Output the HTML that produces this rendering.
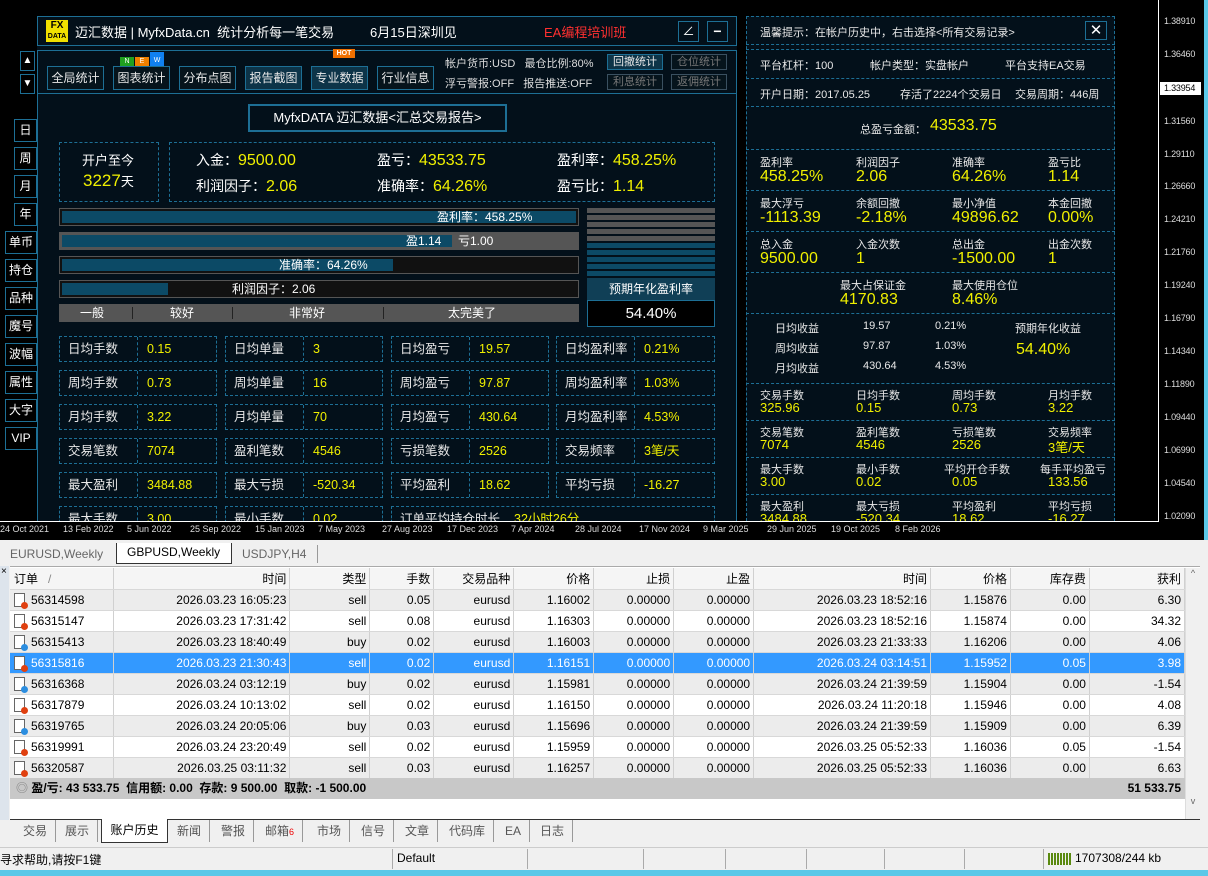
<!DOCTYPE html>
<html><head><meta charset="utf-8"><style>
*{margin:0;padding:0;box-sizing:border-box}
body{width:1208px;height:876px;overflow:hidden;background:#000;font-family:"Liberation Sans","Noto Sans CJK SC",sans-serif;position:relative;color:#e8e8e8}
.a{position:absolute;white-space:nowrap}
.y{color:#f0f000}
.bx{position:absolute;border:1px solid #1d6f95}
.ds{position:absolute;border:1px dashed #1d6f95}
.btn{position:absolute;border:1px solid #1d6f95;background:#06141c;color:#e8e8e8;font-size:12px;text-align:center;line-height:22px}
.sb{position:absolute;border:1px solid #1d6f95;background:#000;color:#fff;font-size:12px;text-align:center}
.pr{position:absolute;left:1164px;font-size:9px;color:#ddd;font-family:"Liberation Sans",sans-serif;letter-spacing:-0.2px}
.dt{position:absolute;top:524px;font-size:9px;color:#ddd;font-family:"Liberation Sans",sans-serif}
.bar{position:absolute;left:59px;width:520px;height:18px;border:1px solid #555;background:#111}
.bar i{position:absolute;left:2px;top:2px;bottom:2px;background:#0c4a66}
.bar span{position:absolute;top:0;font-size:12px;line-height:16px;color:#fff}
.cell{position:absolute;height:26px;border:1px dashed #1d6f95;font-size:12.5px;line-height:24px}
.cell b{font-weight:normal;position:absolute;left:8px}
.cell u{text-decoration:none;position:absolute;left:87px;color:#f0f000}
.cell s{position:absolute;left:77px;top:0;bottom:0;border-left:1px dashed #1d6f95}
.rs{position:absolute;left:746px;width:369px;border-top:1px dashed #1d6f95;font-size:11px}
.rl{position:absolute;font-size:11px;color:#e8e8e8}
.rv{position:absolute;font-size:16px;color:#f0f000}
table{border-collapse:collapse;position:absolute;left:10px;top:568px;width:1175px;font-size:12px;color:#000;font-family:"Liberation Sans","Noto Sans CJK SC",sans-serif}
td{height:21px;border-right:1px solid #d0d0d0;border-bottom:1px solid #d8d8d8;text-align:right;padding:0 3px;white-space:nowrap}
tr:nth-child(even) td{background:#ececec}
tr:nth-child(odd) td{background:#fff}
tr.h td{background:#f5f5f5;height:21px}
tr.sel td{background:#3399ff;color:#fff}
td.o{text-align:left;padding-left:4px}
.ic{display:inline-block;width:11px;height:14px;border:1px solid #666;background:#fff;vertical-align:-3px;margin-right:6px;position:relative}
.ic:after{content:"";position:absolute;right:-4px;bottom:-3px;width:7px;height:7px;border-radius:50%;background:#e04010}
.ic.bu:after{background:#2c8ee0}
.tb{position:absolute;top:820px;height:22px;font-size:12px;color:#555;line-height:22px;padding:0 8px;border-right:1px solid #999}
</style></head><body>

<div class="a" style="left:1158px;top:0;width:1px;height:522px;background:#fff"></div>
<div class="a" style="left:0;top:521px;width:1159px;height:1px;background:#fff"></div>
<div class="a" style="left:1204px;top:0;width:4px;height:540px;background:#5ac8e8"></div>
<div class="pr" style="top:16px">1.38910</div><div class="pr" style="top:49px">1.36460</div>
<div class="a" style="left:1160px;top:82px;width:41px;height:13px;background:#fff"></div>
<div class="pr" style="top:83px;color:#000">1.33954</div>
<div class="pr" style="top:116px">1.31560</div><div class="pr" style="top:149px">1.29110</div><div class="pr" style="top:181px">1.26660</div><div class="pr" style="top:214px">1.24210</div><div class="pr" style="top:247px">1.21760</div><div class="pr" style="top:280px">1.19240</div><div class="pr" style="top:313px">1.16790</div><div class="pr" style="top:346px">1.14340</div><div class="pr" style="top:379px">1.11890</div><div class="pr" style="top:412px">1.09440</div><div class="pr" style="top:445px">1.06990</div><div class="pr" style="top:478px">1.04540</div><div class="pr" style="top:511px">1.02090</div>
<div class="dt" style="left:0">24 Oct 2021</div><div class="dt" style="left:63px">13 Feb 2022</div><div class="dt" style="left:127px">5 Jun 2022</div><div class="dt" style="left:190px">25 Sep 2022</div><div class="dt" style="left:255px">15 Jan 2023</div><div class="dt" style="left:318px">7 May 2023</div><div class="dt" style="left:382px">27 Aug 2023</div><div class="dt" style="left:447px">17 Dec 2023</div><div class="dt" style="left:511px">7 Apr 2024</div><div class="dt" style="left:575px">28 Jul 2024</div><div class="dt" style="left:639px">17 Nov 2024</div><div class="dt" style="left:703px">9 Mar 2025</div><div class="dt" style="left:767px">29 Jun 2025</div><div class="dt" style="left:831px">19 Oct 2025</div><div class="dt" style="left:895px">8 Feb 2026</div>

<div class="sb" style="left:20px;top:51px;width:15px;height:20px;line-height:18px;font-size:10px">▲</div>
<div class="sb" style="left:20px;top:74px;width:15px;height:20px;line-height:18px;font-size:10px">▼</div>
<div class="sb" style="left:14px;top:119px;width:23px;height:23px;line-height:21px">日</div>
<div class="sb" style="left:14px;top:147px;width:23px;height:23px;line-height:21px">周</div>
<div class="sb" style="left:14px;top:175px;width:23px;height:23px;line-height:21px">月</div>
<div class="sb" style="left:14px;top:203px;width:23px;height:23px;line-height:21px">年</div>
<div class="sb" style="left:5px;top:231px;width:32px;height:23px;line-height:21px">单币</div>
<div class="sb" style="left:5px;top:259px;width:32px;height:23px;line-height:21px">持仓</div>
<div class="sb" style="left:5px;top:287px;width:32px;height:23px;line-height:21px">品种</div>
<div class="sb" style="left:5px;top:315px;width:32px;height:23px;line-height:21px">魔号</div>
<div class="sb" style="left:5px;top:343px;width:32px;height:23px;line-height:21px">波幅</div>
<div class="sb" style="left:5px;top:371px;width:32px;height:23px;line-height:21px">属性</div>
<div class="sb" style="left:5px;top:399px;width:32px;height:23px;line-height:21px">大字</div>
<div class="sb" style="left:5px;top:427px;width:32px;height:23px;line-height:21px">VIP</div>

<div class="a" style="left:37px;top:16px;width:700px;height:505px;background:#03101a"></div>
<div class="bx" style="left:37px;top:16px;width:700px;height:30px"></div>
<div class="a" style="left:46px;top:20px;width:22px;height:22px;background:#f0e000;color:#000;font-size:10px;font-weight:bold;text-align:center;line-height:10px;padding-top:1px">FX<br><span style="font-size:7px">DATA</span></div>
<div class="a" style="left:75px;top:22px;font-size:13px;color:#fff">迈汇数据 | MyfxData.cn&nbsp; 统计分析每一笔交易</div>
<div class="a" style="left:370px;top:22px;font-size:13px;color:#fff">6月15日深圳见</div>
<div class="a" style="left:544px;top:22px;font-size:13px;color:#ff3030">EA编程培训班</div>
<div class="sb" style="left:678px;top:21px;width:21px;height:21px;line-height:19px;font-size:12px;background:#03101a">∠</div>
<div class="sb" style="left:707px;top:21px;width:21px;height:21px;line-height:18px;font-size:14px;background:#03101a;font-weight:bold">−</div>

<div class="bx" style="left:37px;top:50px;width:700px;height:44px"></div>
<div class="btn" style="left:47px;top:66px;width:57px;height:24px">全局统计</div>
<div class="btn" style="left:113px;top:66px;width:57px;height:24px">图表统计</div>
<div class="btn" style="left:179px;top:66px;width:57px;height:24px">分布点图</div>
<div class="btn" style="left:245px;top:66px;width:57px;height:24px;background:#0d3448">报告截图</div>
<div class="btn" style="left:311px;top:66px;width:57px;height:24px;background:#0d3448">专业数据</div>
<div class="btn" style="left:377px;top:66px;width:57px;height:24px">行业信息</div>
<div class="a" style="left:120px;top:57px;width:14px;height:9px;background:#20a020;color:#fff;font-size:7px;text-align:center;line-height:9px">N</div>
<div class="a" style="left:135px;top:57px;width:14px;height:9px;background:#f08000;color:#fff;font-size:7px;text-align:center;line-height:9px">E</div>
<div class="a" style="left:150px;top:52px;width:14px;height:14px;background:#1080f0;color:#fff;font-size:7px;text-align:center;line-height:18px">W</div>
<div class="a" style="left:333px;top:49px;width:22px;height:9px;background:#f07000;color:#fff;font-size:7px;text-align:center;line-height:9px;font-weight:bold">HOT</div>
<div class="a" style="left:445px;top:55px;font-size:11px;color:#ddd">帐户货币:USD&nbsp;&nbsp; 最仓比例:80%</div>
<div class="a" style="left:445px;top:75px;font-size:11px;color:#ddd">浮亏警报:OFF&nbsp;&nbsp; 报告推送:OFF</div>
<div class="btn" style="left:607px;top:54px;width:56px;height:16px;line-height:14px;font-size:11px;background:#0d3448">回撤统计</div>
<div class="btn" style="left:671px;top:54px;width:56px;height:16px;line-height:14px;font-size:11px;color:#777;border-color:#3a5060">仓位统计</div>
<div class="btn" style="left:607px;top:74px;width:56px;height:16px;line-height:14px;font-size:11px;color:#777;border-color:#3a5060">利息统计</div>
<div class="btn" style="left:671px;top:74px;width:56px;height:16px;line-height:14px;font-size:11px;color:#777;border-color:#3a5060">返佣统计</div>

<div class="a" style="left:37px;top:94px;width:1px;height:427px;background:#1d6f95"></div>
<div class="a" style="left:736px;top:94px;width:1px;height:427px;background:#1d6f95"></div>
<div class="a" style="left:248px;top:104px;width:259px;height:28px;border:2px solid #1d6f95;font-size:13px;color:#fff;text-align:center;line-height:24px">MyfxDATA 迈汇数据&lt;汇总交易报告&gt;</div>

<div class="ds" style="left:59px;top:142px;width:100px;height:60px"></div>
<div class="a" style="left:82px;top:150px;font-size:13px;color:#fff">开户至今</div>
<div class="a" style="left:83px;top:171px;font-size:17px" ><span class="y">3227</span><span style="font-size:13px;color:#fff">天</span></div>
<div class="ds" style="left:169px;top:142px;width:546px;height:60px"></div>
<div class="a" style="left:196px;top:150px;font-size:14px;color:#fff">入金：<span class="y" style="font-size:16px">9500.00</span></div>
<div class="a" style="left:377px;top:150px;font-size:14px;color:#fff">盈亏：<span class="y" style="font-size:16px">43533.75</span></div>
<div class="a" style="left:557px;top:150px;font-size:14px;color:#fff">盈利率：<span class="y" style="font-size:16px">458.25%</span></div>
<div class="a" style="left:196px;top:176px;font-size:14px;color:#fff">利润因子：<span class="y" style="font-size:16px">2.06</span></div>
<div class="a" style="left:377px;top:176px;font-size:14px;color:#fff">准确率：<span class="y" style="font-size:16px">64.26%</span></div>
<div class="a" style="left:557px;top:176px;font-size:14px;color:#fff">盈亏比：<span class="y" style="font-size:16px">1.14</span></div>

<div class="bar" style="top:208px"><i style="width:514px"></i><span style="left:377px">盈利率：458.25%</span></div>
<div class="bar" style="top:232px;background:#555"><i style="width:390px"></i><span style="left:346px">盈1.14</span><span style="left:398px">亏1.00</span></div>
<div class="bar" style="top:256px"><i style="width:331px"></i><span style="left:219px">准确率：64.26%</span></div>
<div class="bar" style="top:280px"><i style="width:106px"></i><span style="left:172px">利润因子：2.06</span></div>
<div class="bar" style="top:304px;background:#555;font-size:12px;color:#fff;line-height:16px">
<span style="left:20px">一般</span><span style="left:110px">较好</span><span style="left:229px">非常好</span><span style="left:388px">太完美了</span>
<i style="left:72px;width:1px;background:#222"></i><i style="left:172px;width:1px;background:#222"></i><i style="left:323px;width:1px;background:#222"></i></div>
<div class="a" style="left:587px;top:208px;width:128px;height:68px;background:repeating-linear-gradient(#555 0 5px,transparent 5px 7px)"></div>
<div class="a" style="left:587px;top:243px;width:128px;height:33px;background:repeating-linear-gradient(#0c4a66 0 5px,transparent 5px 7px)"></div>
<div class="a" style="left:587px;top:278px;width:128px;height:22px;background:#103f56;font-size:12px;color:#fff;text-align:center;line-height:22px">预期年化盈利率</div>
<div class="a" style="left:587px;top:300px;width:128px;height:27px;background:#000;border:1px solid #1d6f95;font-size:15px;color:#fff;text-align:center;line-height:25px">54.40%</div>

<div class="cell" style="left:59px;top:336px;width:158px"><b>日均手数</b><s></s><u>0.15</u></div>
<div class="cell" style="left:225px;top:336px;width:158px"><b>日均单量</b><s></s><u>3</u></div>
<div class="cell" style="left:391px;top:336px;width:158px"><b>日均盈亏</b><s></s><u>19.57</u></div>
<div class="cell" style="left:556px;top:336px;width:159px"><b>日均盈利率</b><s></s><u>0.21%</u></div>
<div class="cell" style="left:59px;top:370px;width:158px"><b>周均手数</b><s></s><u>0.73</u></div>
<div class="cell" style="left:225px;top:370px;width:158px"><b>周均单量</b><s></s><u>16</u></div>
<div class="cell" style="left:391px;top:370px;width:158px"><b>周均盈亏</b><s></s><u>97.87</u></div>
<div class="cell" style="left:556px;top:370px;width:159px"><b>周均盈利率</b><s></s><u>1.03%</u></div>
<div class="cell" style="left:59px;top:404px;width:158px"><b>月均手数</b><s></s><u>3.22</u></div>
<div class="cell" style="left:225px;top:404px;width:158px"><b>月均单量</b><s></s><u>70</u></div>
<div class="cell" style="left:391px;top:404px;width:158px"><b>月均盈亏</b><s></s><u>430.64</u></div>
<div class="cell" style="left:556px;top:404px;width:159px"><b>月均盈利率</b><s></s><u>4.53%</u></div>
<div class="cell" style="left:59px;top:438px;width:158px"><b>交易笔数</b><s></s><u>7074</u></div>
<div class="cell" style="left:225px;top:438px;width:158px"><b>盈利笔数</b><s></s><u>4546</u></div>
<div class="cell" style="left:391px;top:438px;width:158px"><b>亏损笔数</b><s></s><u>2526</u></div>
<div class="cell" style="left:556px;top:438px;width:159px"><b>交易频率</b><s></s><u>3笔/天</u></div>
<div class="cell" style="left:59px;top:472px;width:158px"><b>最大盈利</b><s></s><u>3484.88</u></div>
<div class="cell" style="left:225px;top:472px;width:158px"><b>最大亏损</b><s></s><u>-520.34</u></div>
<div class="cell" style="left:391px;top:472px;width:158px"><b>平均盈利</b><s></s><u>18.62</u></div>
<div class="cell" style="left:556px;top:472px;width:159px"><b>平均亏损</b><s></s><u>-16.27</u></div>
<div class="a" style="left:38px;top:506px;width:698px;height:15px;overflow:hidden">
<div class="cell" style="left:21px;top:0;width:158px"><b>最大手数</b><s></s><u>3.00</u></div>
<div class="cell" style="left:187px;top:0;width:158px"><b>最小手数</b><s></s><u>0.02</u></div>
<div class="cell" style="left:353px;top:0;width:324px"><b>订单平均持仓时长</b><u style="left:122px">32小时26分</u></div>
</div>

<div class="a" style="left:746px;top:16px;width:369px;height:505px;background:#03101a;border-left:1px dashed #1d6f95;border-right:1px dashed #1d6f95"></div>
<div class="rs" style="top:16px"></div>
<div class="rl" style="left:760px;top:24px">温馨提示：在帐户历史中，右击选择&lt;所有交易记录&gt;</div>
<div class="sb" style="left:1085px;top:21px;width:22px;height:19px;line-height:17px;font-size:15px;background:#03101a">✕</div>
<div class="rs" style="top:44px"></div><div class="rs" style="top:49px"></div>
<div class="rl" style="left:760px;top:57px">平台杠杆：100</div><div class="rl" style="left:870px;top:57px">帐户类型：实盘帐户</div><div class="rl" style="left:1005px;top:57px">平台支持EA交易</div>
<div class="rs" style="top:78px"></div>
<div class="rl" style="left:760px;top:86px">开户日期：2017.05.25</div><div class="rl" style="left:900px;top:86px">存活了2224个交易日</div><div class="rl" style="left:1015px;top:86px">交易周期：446周</div>
<div class="rs" style="top:106px"></div>
<div class="rl" style="left:860px;top:121px">总盈亏金额：</div><div class="rv" style="left:930px;top:117px">43533.75</div>
<div class="rs" style="top:149px"></div>
<div class="rl" style="left:760px;top:154px">盈利率</div><div class="rl" style="left:856px;top:154px">利润因子</div><div class="rl" style="left:952px;top:154px">准确率</div><div class="rl" style="left:1048px;top:154px">盈亏比</div>
<div class="rv" style="left:760px;top:168px">458.25%</div><div class="rv" style="left:856px;top:168px">2.06</div><div class="rv" style="left:952px;top:168px">64.26%</div><div class="rv" style="left:1048px;top:168px">1.14</div>
<div class="rs" style="top:190px"></div>
<div class="rl" style="left:760px;top:195px">最大浮亏</div><div class="rl" style="left:856px;top:195px">余额回撤</div><div class="rl" style="left:952px;top:195px">最小净值</div><div class="rl" style="left:1048px;top:195px">本金回撤</div>
<div class="rv" style="left:760px;top:209px">-1113.39</div><div class="rv" style="left:856px;top:209px">-2.18%</div><div class="rv" style="left:952px;top:209px">49896.62</div><div class="rv" style="left:1048px;top:209px">0.00%</div>
<div class="rs" style="top:231px"></div>
<div class="rl" style="left:760px;top:236px">总入金</div><div class="rl" style="left:856px;top:236px">入金次数</div><div class="rl" style="left:952px;top:236px">总出金</div><div class="rl" style="left:1048px;top:236px">出金次数</div>
<div class="rv" style="left:760px;top:250px">9500.00</div><div class="rv" style="left:856px;top:250px">1</div><div class="rv" style="left:952px;top:250px">-1500.00</div><div class="rv" style="left:1048px;top:250px">1</div>
<div class="rs" style="top:272px"></div>
<div class="rl" style="left:840px;top:277px">最大占保证金</div><div class="rl" style="left:952px;top:277px">最大使用仓位</div>
<div class="rv" style="left:840px;top:291px">4170.83</div><div class="rv" style="left:952px;top:291px">8.46%</div>
<div class="rs" style="top:313px"></div>
<div class="rl" style="left:775px;top:320px">日均收益</div><div class="rl" style="left:863px;top:320px">19.57</div><div class="rl" style="left:935px;top:320px">0.21%</div><div class="rl" style="left:1015px;top:320px">预期年化收益</div>
<div class="rl" style="left:775px;top:340px">周均收益</div><div class="rl" style="left:863px;top:340px">97.87</div><div class="rl" style="left:935px;top:340px">1.03%</div><div class="rv" style="left:1016px;top:341px">54.40%</div>
<div class="rl" style="left:775px;top:360px">月均收益</div><div class="rl" style="left:863px;top:360px">430.64</div><div class="rl" style="left:935px;top:360px">4.53%</div>
<div class="rs" style="top:383px"></div>
<div class="rl" style="left:760px;top:387px">交易手数</div><div class="rl" style="left:856px;top:387px">日均手数</div><div class="rl" style="left:952px;top:387px">周均手数</div><div class="rl" style="left:1048px;top:387px">月均手数</div>
<div class="rv" style="left:760px;top:400px;font-size:13px">325.96</div><div class="rv" style="left:856px;top:400px;font-size:13px">0.15</div><div class="rv" style="left:952px;top:400px;font-size:13px">0.73</div><div class="rv" style="left:1048px;top:400px;font-size:13px">3.22</div>
<div class="rs" style="top:420px"></div>
<div class="rl" style="left:760px;top:424px">交易笔数</div><div class="rl" style="left:856px;top:424px">盈利笔数</div><div class="rl" style="left:952px;top:424px">亏损笔数</div><div class="rl" style="left:1048px;top:424px">交易频率</div>
<div class="rv" style="left:760px;top:437px;font-size:13px">7074</div><div class="rv" style="left:856px;top:437px;font-size:13px">4546</div><div class="rv" style="left:952px;top:437px;font-size:13px">2526</div><div class="rv" style="left:1048px;top:437px;font-size:13px">3笔/天</div>
<div class="rs" style="top:457px"></div>
<div class="rl" style="left:760px;top:461px">最大手数</div><div class="rl" style="left:856px;top:461px">最小手数</div><div class="rl" style="left:944px;top:461px">平均开仓手数</div><div class="rl" style="left:1040px;top:461px">每手平均盈亏</div>
<div class="rv" style="left:760px;top:474px;font-size:13px">3.00</div><div class="rv" style="left:856px;top:474px;font-size:13px">0.02</div><div class="rv" style="left:952px;top:474px;font-size:13px">0.05</div><div class="rv" style="left:1048px;top:474px;font-size:13px">133.56</div>
<div class="rs" style="top:494px"></div>
<div class="a" style="left:746px;top:495px;width:369px;height:26px;overflow:hidden">
<div class="rl" style="left:14px;top:3px">最大盈利</div><div class="rl" style="left:110px;top:3px">最大亏损</div><div class="rl" style="left:206px;top:3px">平均盈利</div><div class="rl" style="left:302px;top:3px">平均亏损</div>
<div class="rv" style="left:14px;top:16px;font-size:13px">3484.88</div><div class="rv" style="left:110px;top:16px;font-size:13px">-520.34</div><div class="rv" style="left:206px;top:16px;font-size:13px">18.62</div><div class="rv" style="left:302px;top:16px;font-size:13px">-16.27</div>
</div>
<div class="a" style="left:0;top:521px;width:1159px;height:1px;background:#fff"></div>

<div class="a" style="left:0;top:540px;width:1208px;height:336px;background:#f0f0f0"></div>
<div class="a" style="left:0;top:545px;width:115px;height:18px;font-size:12px;color:#666;line-height:18px;padding-left:10px">EURUSD,Weekly</div>
<div class="a" style="left:116px;top:543px;width:116px;height:21px;background:#fff;border:1px solid #333;border-top:none;font-size:12px;color:#000;line-height:19px;padding-left:10px">GBPUSD,Weekly</div>
<div class="a" style="left:232px;top:545px;width:86px;height:18px;font-size:12px;color:#666;line-height:18px;padding-left:10px;border-right:1px solid #999">USDJPY,H4</div>
<div class="a" style="left:0;top:566px;width:9px;height:254px;background:#dde4ec"></div>
<div class="a" style="left:1px;top:566px;font-size:10px;color:#000">×</div>
<div class="a" style="left:10px;top:566px;width:1190px;height:254px;background:#fff;border-top:1px solid #aaa"></div>
<table>
<tr class="h"><td class="o" style="width:104px">订单 &nbsp; <span style="color:#888">/</span></td><td style="width:176px">时间</td><td style="width:80px">类型</td><td style="width:64px">手数</td><td style="width:80px">交易品种</td><td style="width:80px">价格</td><td style="width:80px">止损</td><td style="width:80px">止盈</td><td style="width:177px">时间</td><td style="width:80px">价格</td><td style="width:79px">库存费</td><td style="width:95px">获利</td></tr>
<tr><td class="o"><i class="ic"></i>56314598</td><td>2026.03.23 16:05:23</td><td>sell</td><td>0.05</td><td>eurusd</td><td>1.16002</td><td>0.00000</td><td>0.00000</td><td>2026.03.23 18:52:16</td><td>1.15876</td><td>0.00</td><td>6.30</td></tr>
<tr><td class="o"><i class="ic"></i>56315147</td><td>2026.03.23 17:31:42</td><td>sell</td><td>0.08</td><td>eurusd</td><td>1.16303</td><td>0.00000</td><td>0.00000</td><td>2026.03.23 18:52:16</td><td>1.15874</td><td>0.00</td><td>34.32</td></tr>
<tr><td class="o"><i class="ic bu"></i>56315413</td><td>2026.03.23 18:40:49</td><td>buy</td><td>0.02</td><td>eurusd</td><td>1.16003</td><td>0.00000</td><td>0.00000</td><td>2026.03.23 21:33:33</td><td>1.16206</td><td>0.00</td><td>4.06</td></tr>
<tr class="sel"><td class="o"><i class="ic"></i>56315816</td><td>2026.03.23 21:30:43</td><td>sell</td><td>0.02</td><td>eurusd</td><td>1.16151</td><td>0.00000</td><td>0.00000</td><td>2026.03.24 03:14:51</td><td>1.15952</td><td>0.05</td><td>3.98</td></tr>
<tr><td class="o"><i class="ic bu"></i>56316368</td><td>2026.03.24 03:12:19</td><td>buy</td><td>0.02</td><td>eurusd</td><td>1.15981</td><td>0.00000</td><td>0.00000</td><td>2026.03.24 21:39:59</td><td>1.15904</td><td>0.00</td><td>-1.54</td></tr>
<tr><td class="o"><i class="ic"></i>56317879</td><td>2026.03.24 10:13:02</td><td>sell</td><td>0.02</td><td>eurusd</td><td>1.16150</td><td>0.00000</td><td>0.00000</td><td>2026.03.24 11:20:18</td><td>1.15946</td><td>0.00</td><td>4.08</td></tr>
<tr><td class="o"><i class="ic bu"></i>56319765</td><td>2026.03.24 20:05:06</td><td>buy</td><td>0.03</td><td>eurusd</td><td>1.15696</td><td>0.00000</td><td>0.00000</td><td>2026.03.24 21:39:59</td><td>1.15909</td><td>0.00</td><td>6.39</td></tr>
<tr><td class="o"><i class="ic"></i>56319991</td><td>2026.03.24 23:20:49</td><td>sell</td><td>0.02</td><td>eurusd</td><td>1.15959</td><td>0.00000</td><td>0.00000</td><td>2026.03.25 05:52:33</td><td>1.16036</td><td>0.05</td><td>-1.54</td></tr>
<tr><td class="o"><i class="ic"></i>56320587</td><td>2026.03.25 03:11:32</td><td>sell</td><td>0.03</td><td>eurusd</td><td>1.16257</td><td>0.00000</td><td>0.00000</td><td>2026.03.25 05:52:33</td><td>1.16036</td><td>0.00</td><td>6.63</td></tr>
</table>
<div class="a" style="left:10px;top:778px;width:1175px;height:21px;background:#c8c8c8;font-size:12px;font-weight:bold;color:#000;line-height:21px;padding-left:6px"><span style="color:#888">◎</span> 盈/亏: 43 533.75&nbsp; 信用额: 0.00&nbsp; 存款: 9 500.00&nbsp; 取款: -1 500.00<span style="position:absolute;right:4px">51 533.75</span></div>
<div class="a" style="left:1185px;top:568px;width:15px;height:251px;background:#f0f0f0;border-left:1px solid #ddd;font-size:9px;color:#666;text-align:center">^<div style="position:absolute;top:228px;width:14px">v</div></div>
<div class="a" style="left:10px;top:819px;width:1190px;height:1px;background:#333"></div>
<div class="tb" style="left:15px">交易</div><div class="tb" style="left:57px">展示</div>
<div class="a" style="left:101px;top:819px;width:67px;height:24px;background:#fff;border:1px solid #333;border-top:none;font-size:12px;color:#000;line-height:22px;text-align:center">账户历史</div>
<div class="tb" style="left:169px">新闻</div><div class="tb" style="left:213px">警报</div><div class="tb" style="left:257px">邮箱<span style="color:#e00;font-size:9px">6</span></div><div class="tb" style="left:309px">市场</div><div class="tb" style="left:353px">信号</div><div class="tb" style="left:397px">文章</div><div class="tb" style="left:441px">代码库</div><div class="tb" style="left:497px">EA</div><div class="tb" style="left:532px">日志</div>
<div class="a" style="left:0;top:847px;width:1208px;height:1px;background:#ccc"></div>
<div class="a" style="left:0;top:851px;font-size:12px;color:#000">寻求帮助,请按F1键</div>
<div class="a" style="left:392px;top:849px;width:1px;height:20px;background:#aaa"></div>
<div class="a" style="left:397px;top:851px;font-size:12px;color:#000">Default</div>
<div class="a" style="left:527px;top:849px;width:1px;height:20px;background:#aaa"></div>
<div class="a" style="left:643px;top:849px;width:1px;height:20px;background:#aaa"></div>
<div class="a" style="left:725px;top:849px;width:1px;height:20px;background:#aaa"></div>
<div class="a" style="left:806px;top:849px;width:1px;height:20px;background:#aaa"></div>
<div class="a" style="left:884px;top:849px;width:1px;height:20px;background:#aaa"></div>
<div class="a" style="left:964px;top:849px;width:1px;height:20px;background:#aaa"></div>
<div class="a" style="left:1043px;top:849px;width:1px;height:20px;background:#aaa"></div>
<div class="a" style="left:1048px;top:853px;width:23px;height:12px;background:repeating-linear-gradient(90deg,#5a8a10 0 2px,transparent 2px 3px)"></div>
<div class="a" style="left:1075px;top:851px;font-size:12px;color:#000">1707308/244 kb</div>
<div class="a" style="left:0;top:870px;width:1208px;height:6px;background:#5ac8e8"></div>
</body></html>
